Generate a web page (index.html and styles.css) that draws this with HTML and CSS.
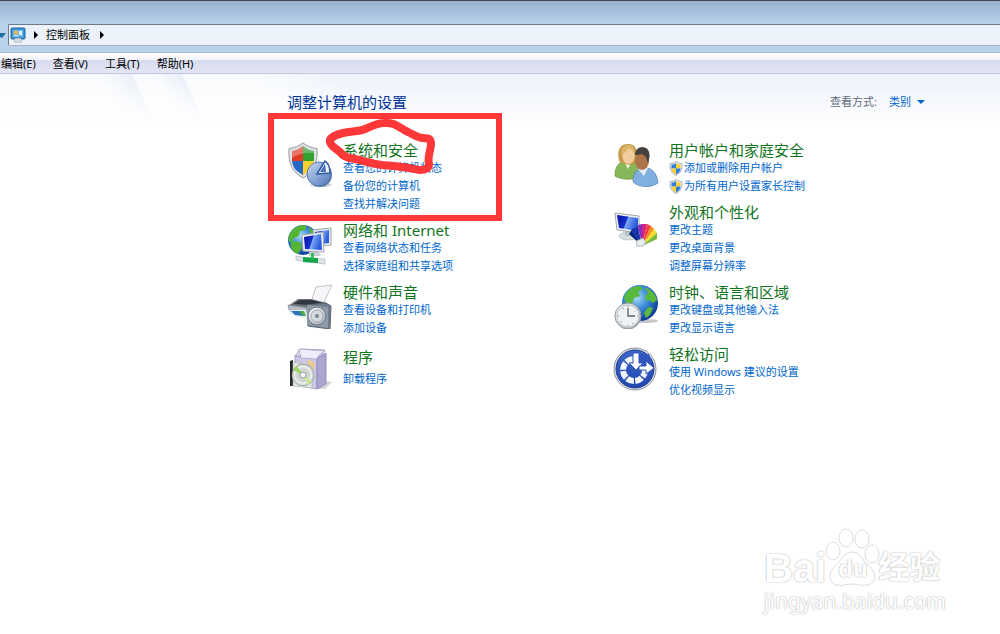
FILE: index.html
```html
<!DOCTYPE html>
<html lang="zh-CN">
<head>
  <meta charset="UTF-8">
  <title>控制面板</title>
  <link rel="stylesheet" href="styles.css">
</head>
<body>

  <!-- gradients and the small shield shared by the icons -->
  <svg class="defs" aria-hidden="true">
    <defs>
      <linearGradient id="screen" x1="0" y1="0" x2="1" y2="0.3">
        <stop offset="0" stop-color="#0612a0"/><stop offset="0.5" stop-color="#1530cc"/><stop offset="0.55" stop-color="#7fa8f4"/><stop offset="1" stop-color="#2a5be0"/>
      </linearGradient>
      <radialGradient id="globe" cx="0.4" cy="0.35" r="0.65">
        <stop offset="0" stop-color="#a8dcf8"/><stop offset="0.5" stop-color="#3b8ad8"/><stop offset="1" stop-color="#0f3c96"/>
      </radialGradient>
      <linearGradient id="metal" x1="0" y1="0" x2="1" y2="1">
        <stop offset="0" stop-color="#ffffff"/><stop offset="1" stop-color="#9aa3ac"/>
      </linearGradient>
      <linearGradient id="pie" x1="0" y1="0" x2="1" y2="1">
        <stop offset="0" stop-color="#c9dcf2"/><stop offset="1" stop-color="#4a74b8"/>
      </linearGradient>
      <radialGradient id="disc">
        <stop offset="0" stop-color="#ffffff"/><stop offset="0.5" stop-color="#c9cfcb"/><stop offset="0.8" stop-color="#eef2ee"/><stop offset="1" stop-color="#a9b0ac"/>
      </radialGradient>
      <linearGradient id="ease" x1="0" y1="0" x2="0" y2="1">
        <stop offset="0" stop-color="#3f68cc"/><stop offset="1" stop-color="#1f45b0"/>
      </linearGradient>
      <symbol id="uac" viewBox="0 0 14 16">
        <path d="M7 .5C5 2 3 2.600 .7 2.700C.5 8.500 1.500 12.500 7 15.500C12.500 12.500 13.500 8.500 13.300 2.700C11 2.600 9 2 7 .5Z" fill="#e8edf2" stroke="#8c97a3" stroke-width=".8"/>
        <path d="M7 2.200C5.500 3.300 4 3.800 2.200 4V8H7Z" fill="#2f7fd8"/>
        <path d="M7 2.200C8.500 3.300 10 3.800 11.800 4V8H7Z" fill="#fbd232"/>
        <path d="M2.200 8C2.500 11 4 12.800 7 14.300V8Z" fill="#fbd232"/>
        <path d="M11.800 8C11.500 11 10 12.800 7 14.300V8Z" fill="#2f7fd8"/>
      </symbol>
    </defs>
  </svg>

  <header class="titlebar">
    <nav class="address">
      <svg class="history" viewBox="0 0 6 8"><path d="M0 2H6L2 7L0 6Z" fill="#1d6f9f"/></svg>
      <div class="path">
        <svg class="path-icon" viewBox="0 0 16 16">
          <rect x="1" y="1" width="14" height="11" rx="1" fill="#3f93d0" stroke="#24689f"/>
          <rect x="3" y="3" width="10" height="7" fill="#6bb9ea"/>
          <circle cx="6" cy="5.500" r="2" fill="#f2b43c"/><path d="M9 4H12V8H9ZM4 8H8V9H4Z" fill="#d9f0fb"/>
          <ellipse cx="8" cy="13.500" rx="4" ry="2.500" fill="#d3dbe1" stroke="#98a6b1" stroke-width=".5"/>
        </svg>
        <span class="arrow"></span>
        <a href="#">控制面板</a>
        <span class="arrow"></span>
      </div>
    </nav>
  </header>

  <nav class="menubar">
    <button type="button">编辑(E)</button>
    <button type="button">查看(V)</button>
    <button type="button">工具(T)</button>
    <button type="button">帮助(H)</button>
  </nav>

  <main class="content">
    <div class="heading">
      <h1>调整计算机的设置</h1>
      <div class="view-by">
        <span>查看方式:</span>
        <button type="button">类别<span class="caret"></span></button>
      </div>
    </div>

    <div class="columns">
      <div class="column">
        <section class="category marked">
          <svg class="icon" viewBox="0 0 46 46">
            <ellipse cx="34" cy="44" rx="11" ry="2" fill="#cfd3d6"/>
            <path d="M16 2C12 5 7 7 2 7.500C1 22 5 31 16 37C27 31 31 22 30 7.500C25 7 20 5 16 2Z" fill="#dfe2e4" stroke="#989da1"/>
            <path d="M16 5C12 8 9 9.500 5 10V20H16Z" fill="#de3a26"/>
            <path d="M16 5C20 8 23 9.500 27 10V20H16Z" fill="#33a032"/>
            <path d="M5 20C6 27 9 30 16 34V20Z" fill="#2868c8"/>
            <path d="M27 20C26 27 23 30 16 34V20Z" fill="#fbd22b"/>
            <path d="M5 10C9 9.500 12 8 16 5C20 8 23 9.500 27 10V12C18 11 11 13 5 17Z" fill="#fff" opacity=".3"/>
            <circle cx="33" cy="34" r="12" fill="#5677a9"/>
            <circle cx="32" cy="33" r="12" fill="url(#pie)" stroke="#5878aa"/>
            <path d="M30 33L38 20C41 22 43 27 43 32Z" fill="#e8f2fc" stroke="#2e55a2" stroke-width="1.500"/>
            <path d="M33 31L38 23L39 31Z" fill="#456fb5"/>
          </svg>
          <div class="info">
            <h2><a href="#">系统和安全</a></h2>
            <a href="#">查看您的计算机状态</a>
            <a href="#">备份您的计算机</a>
            <a href="#">查找并解决问题</a>
          </div>
          <svg class="marker" viewBox="0 0 234 108">
            <rect x="3" y="3" width="228" height="102"/>
            <path d="M62 29C61 25 67 22 75 20C84 18 90 19 97 16C104 13 109 10 116 10C127 9 131 15 140 19C146 22 150 25 155 25C161 25 163 26 163 31C163 37 159 44 161 51C161 56 156 57 151 57C140 54 127 53 114 52C104 51 96 48 87 46C78 45 74 42 72 39C68 35 63 34 62 29Z"/>
          </svg>
        </section>

        <section class="category">
          <svg class="icon" viewBox="0 0 46 46">
            <circle cx="16" cy="19" r="15" fill="url(#globe)"/>
            <path d="M4 11C8 5 15 3 20 5L18 9L13 10L12 15L7 17L5 22L2 20C1 16 2 13 4 11ZM8 20L14 22L15 27L11 33C5 31 3 26 4 22ZM22 6L28 11L23 13Z" fill="#55b635"/>
            <path d="M26 9L44 7V24L27 26Z" fill="#e7ebef" stroke="#9ea7b0"/><path d="M28 11L42 9V22L28 24Z" fill="url(#screen)"/>
            <path d="M15 14L36 11L37 31L16 30Z" fill="#eff2f5" stroke="#9ea7b0"/><path d="M17 16L34 13L35 29L18 28Z" fill="url(#screen)"/>
            <path d="M22 31H32L34 35H22Z" fill="#c5ccd2"/>
            <path d="M9 35L20 37L38 38V43L20 41L9 39Z" fill="#dfe3e5" stroke="#a8b0b5" stroke-width=".6"/>
            <path d="M16 36L31 37V42L16 41Z" fill="#12a84a"/><path d="M24 32H27V38H24Z" fill="#35ba5f"/>
          </svg>
          <div class="info">
            <h2><a href="#">网络和 Internet</a></h2>
            <a href="#">查看网络状态和任务</a>
            <a href="#">选择家庭组和共享选项</a>
          </div>
        </section>

        <section class="category">
          <svg class="icon" viewBox="0 0 46 46">
            <path d="M24 19L29 4L45 2L38 17L36 21Z" fill="#f4f6f8" stroke="#a8adb2" stroke-width=".7"/>
            <path d="M11 16H24L40 20L34 28H4L1 23Z" fill="#6b747d"/><path d="M13 17H25L36 20L22 22L6 21Z" fill="#30373f"/>
            <path d="M1 22L22 25L39 21V29L22 33L2 27Z" fill="#b6bdc4" stroke="#7f878f" stroke-width=".6"/>
            <path d="M4 27L19 27L21 35L10 34L2 30Z" fill="#e4edf3"/><path d="M4 28L13 28L17 33L8 32Z" fill="#2872bb"/><path d="M12 28H17L19 33H16Z" fill="#4fa747"/>
            <path d="M20 22L39 20L44 23L43 46L21 43Z" fill="#6f7e8c" stroke="#59656f"/>
            <path d="M20 22L41 24V45L20 42Z" fill="#8e9ba8"/>
            <circle cx="30" cy="33" r="9" fill="url(#metal)" stroke="#6d7a86"/><circle cx="30" cy="33" r="6" fill="#d5dbdf" stroke="#a5adb4"/><circle cx="30" cy="33" r="2" fill="#7d878f"/>
          </svg>
          <div class="info">
            <h2><a href="#">硬件和声音</a></h2>
            <a href="#">查看设备和打印机</a>
            <a href="#">添加设备</a>
          </div>
        </section>

        <section class="category">
          <svg class="icon" viewBox="0 0 46 46">
            <path d="M38 36L45 37L38 44H30Z" fill="#d5d5d9"/>
            <path d="M8 11L13 4L38 5L33 13Z" fill="#dedcf0" stroke="#9995bc" stroke-width=".8"/>
            <path d="M8 11L30 13V44L8 40Z" fill="#cac8e4" stroke="#9793bb" stroke-width=".8"/>
            <path d="M30 13L39 8V39L30 44Z" fill="#aaa6cf" stroke="#8985b2" stroke-width=".8"/>
            <path d="M12 4L14 13L30 14L32 10L38 6Z" fill="#eeedf9" stroke="#a19dc2" stroke-width=".7"/>
            <path d="M20 16C26 14 29 18 27 24L23 27Z" fill="#f0c68c"/>
            <path d="M3 16L6 15V41L3 41Z" fill="#26282b"/>
            <path d="M6 17L25 21V43L6 41Z" fill="#e2e8e4" stroke="#a7afab" stroke-width=".6"/>
            <circle cx="16" cy="30" r="11" fill="url(#disc)" stroke="#9da69f" stroke-width=".6"/>
            <path d="M16 30L6 25L10 21Z" fill="#9fd45f"/><path d="M16 30L25 36L21 40Z" fill="#c7e693"/>
            <circle cx="16" cy="30" r="3" fill="#fff" stroke="#8e9691"/>
          </svg>
          <div class="info">
            <h2><a href="#">程序</a></h2>
            <a href="#">卸载程序</a>
          </div>
        </section>
      </div>

      <div class="column">
        <section class="category">
          <svg class="icon" viewBox="0 0 46 46">
            <path d="M2 35C2 24 7 20 15 20C24 20 28 26 28 36C20 39 8 39 2 35Z" fill="#86b85a" stroke="#5b8a30" stroke-width=".7"/>
            <path d="M10 19L15 28L20 19Z" fill="#e9f2d8"/>
            <path d="M7 22C3 12 6 3 14 3C24 2 26 12 23 22L17 24Z" fill="#c49a4c"/>
            <ellipse cx="15.500" cy="15" rx="6" ry="8" fill="#f3cda0"/><path d="M8 14C12 13 14 9 16 7C19 7 20 11 22 13C22 5 18 3 14 4C10 5 8 8 8 14Z" fill="#dbb665"/>
            <path d="M20 41C20 31 25 27 32 27C40 27 44 33 45 42C38 47 27 47 20 41Z" fill="#80afe0" stroke="#557fb4" stroke-width=".7"/>
            <path d="M25 28L31 35L35 27Z" fill="#e5f0fa"/>
            <ellipse cx="29" cy="20" rx="7" ry="9" fill="#ad7448"/>
            <path d="M22 14C22 9 25 6 30 6C37 7 38 14 35 22L33 16L29 13C26 14 24 14 22 14Z" fill="#45413f"/>
          </svg>
          <div class="info">
            <h2><a href="#">用户帐户和家庭安全</a></h2>
            <a href="#"><svg class="uac"><use href="#uac"/></svg>添加或删除用户帐户</a>
            <a href="#"><svg class="uac"><use href="#uac"/></svg>为所有用户设置家长控制</a>
          </div>
        </section>

        <section class="category">
          <svg class="icon" viewBox="0 0 46 46">
            <ellipse cx="16" cy="33" rx="10" ry="4" fill="#d8dde1" stroke="#a8b0b6" stroke-width=".6"/>
            <path d="M12 25H20V33H12Z" fill="#bac1c7"/>
            <path d="M2 10L26 13V30L4 27Z" fill="#eef1f3" stroke="#9fa7ae"/>
            <path d="M4 12L25 15V28L6 25Z" fill="url(#screen)"/>
            <path d="M29 43L16 31L20 25Z" fill="#0c2278"/><path d="M29 43L18 28L25 23Z" fill="#1834a8"/>
            <path d="M29 43L25 22L29 21Z" fill="#8c2cba"/><path d="M29 43L29 21L34 21Z" fill="#d32386"/>
            <path d="M29 43L34 21L38 23Z" fill="#f04135"/><path d="M29 43L38 23L41 26Z" fill="#f78b1f"/>
            <path d="M29 43L41 26L44 30Z" fill="#f8dc2e"/><path d="M29 43L44 30L44 36Z" fill="#73bd38"/>
            <path d="M23 38L30 35L33 39L30 43L24 43Z" fill="#e8ecef" stroke="#8d959b" stroke-width=".6"/>
          </svg>
          <div class="info">
            <h2><a href="#">外观和个性化</a></h2>
            <a href="#">更改主题</a>
            <a href="#">更改桌面背景</a>
            <a href="#">调整屏幕分辨率</a>
          </div>
        </section>

        <section class="category">
          <svg class="icon" viewBox="0 0 46 46">
            <ellipse cx="32" cy="38" rx="13" ry="2" fill="#c6c9cc"/>
            <circle cx="27" cy="20" r="18" fill="url(#globe)"/>
            <path d="M11 14C14 6 21 3 27 3L30 6L25 9L27 13L21 15L19 21L14 21L12 18ZM31 4C38 6 43 11 44 17L40 20L36 17L33 18L32 13L35 10ZM35 24L40 25L37 32L33 35L31 30Z" fill="#58b93c"/>
            <circle cx="15" cy="33" r="13" fill="url(#metal)" stroke="#9299a0"/><circle cx="15" cy="33" r="11" fill="#eef2f4" stroke="#c1c8cc"/>
            <path d="M15 25V33H22" fill="none" stroke="#58636b" stroke-width="1.300"/>
            <path d="M15 23V24M15 42V43M5 33H6M24 33H25M10 25L10.500 26M20 41L19.500 40M8 39L9 38.500M22 28L21.500 28.500" stroke="#77818a"/>
          </svg>
          <div class="info">
            <h2><a href="#">时钟、语言和区域</a></h2>
            <a href="#">更改键盘或其他输入法</a>
            <a href="#">更改显示语言</a>
          </div>
        </section>

        <section class="category">
          <svg class="icon" viewBox="0 0 46 46">
            <circle cx="22" cy="24" r="21" fill="#e2e6ea" stroke="#8d949c"/>
            <circle cx="22" cy="24" r="19" fill="url(#ease)" stroke="#1b3788"/>
            <circle cx="21" cy="25" r="11" fill="none" stroke="#f2f5fb" stroke-width="6" stroke-dasharray="7.240 1.400"/>
            <path d="M23 9L36 9L40 22L24 23Z" fill="#2f56bd"/>
            <path d="M20 8H26V18H30L23 25L16 18H20Z" fill="#fff" stroke="#2f56bd"/>
            <path d="M26 21H33V16L41 23L33 29V25H26Z" fill="#fff" stroke="#2f56bd"/>
          </svg>
          <div class="info">
            <h2><a href="#">轻松访问</a></h2>
            <a href="#">使用 Windows 建议的设置</a>
            <a href="#">优化视频显示</a>
          </div>
        </section>
      </div>
    </div>
  </main>

  <div class="watermark">
    <div class="brand">
      <span>Bai</span>
      <div class="paw">
        <svg viewBox="0 0 52 60">
          <ellipse cx="7" cy="27" rx="7" ry="9"/><ellipse cx="20" cy="14" rx="7" ry="9"/>
          <ellipse cx="36" cy="15" rx="7" ry="9"/><ellipse cx="46" cy="30" rx="7" ry="9"/>
          <path d="M26 28C34 28 36 36 42 41C52 49 50 61 40 61C33 62 31 60 26 60C21 60 17 62 11 61C2 59 2 48 10 41C16 36 18 28 26 28Z"/>
        </svg>
        <span class="du">du</span>
      </div>
      <span class="exp">经验</span>
    </div>
    <div class="site">jingyan.baidu.com</div>
  </div>

</body>
</html>
```
FILE: styles.css
```css
* {
  box-sizing: border-box;
}
body {
  margin: 0;
  min-height: 100vh;
  position: relative;
  background: #fff;
  font-family: "Noto Sans", "Noto Sans CJK SC", sans-serif;
  font-size: 11px;
  line-height: 18px;
  color: #000;
}
a {
  color: #0066cc;
  text-decoration: none;
}
a:hover {
  text-decoration: underline;
}
button {
  padding: 0;
  border: none;
  background: none;
  font: inherit;
  color: inherit;
}
.defs {
  position: absolute;
  width: 0;
  height: 0;
}

/* window frame */
.titlebar {
  padding: 23px 0 6px;
  border-top: 1px solid #44484d;
  border-bottom: 1px solid #a9bdd4;
  background: linear-gradient(#97b0d0, #b9d1ea 22px);
}
.address {
  display: flex;
  align-items: center;
  gap: 2px;
}
.history {
  width: 6px;
  height: 8px;
}
.path {
  flex: 1;
  display: flex;
  align-items: center;
  height: 22px;
  padding-left: 1px;
  border: 1px solid #6f7a88;
  border-right: none;
  border-bottom-color: #a9b5c2;
  border-radius: 2px 0 0 2px;
  background: #ebf2fa;
}
.path a {
  margin-right: 2px;
  color: #000;
}
.path-icon {
  width: 16px;
  height: 16px;
}
.arrow {
  margin: 0 8px;
  border-left: 4px solid #000;
  border-top: 4px solid transparent;
  border-bottom: 4px solid transparent;
}
.menubar {
  display: flex;
  gap: 17px;
  height: 21px;
  padding: 2px 1px;
  border-bottom: 1px solid #c3c9dc;
  background: linear-gradient(#fff, #f2f4fa 7px, #d7dcee 7px, #e2e5f5);
}

/* categories */
.content {
  padding: 19px 61px 0 287px;
  background:
    linear-gradient(#fff0, #fff),
    linear-gradient(65deg, #fff0 110px, #e9eff8 140px, #fff0 141px, #fff0 160px, #e9eff8 185px, #fff0 187px, #fff0 250px, #edf2fa 330px),
    linear-gradient(#f8fafd, #fff);
  background-size: 100% 50px;
  background-repeat: no-repeat;
}
.heading {
  display: flex;
  justify-content: space-between;
  padding-right: 14px;
}
h1,
h2 {
  margin: 0;
  font-size: 15px;
  font-weight: normal;
}
h1 {
  color: #003399;
}
h2 a {
  color: #11731b;
}
.view-by {
  display: flex;
  gap: 12px;
  color: #5e6b78;
}
.view-by button {
  display: flex;
  align-items: center;
  gap: 6px;
  color: #0066cc;
}
.caret {
  border-top: 4px solid #0066cc;
  border-left: 4px solid transparent;
  border-right: 4px solid transparent;
}
.columns {
  display: grid;
  grid-template-columns: 1fr 1fr;
  padding-top: 30px;
}
.column {
  display: flex;
  flex-direction: column;
  gap: 8px;
}
.category {
  display: flex;
  align-items: flex-start;
  gap: 10px;
}
.icon {
  width: 46px;
  height: 46px;
}
.info {
  display: flex;
  flex-direction: column;
  align-items: flex-start;
  justify-content: space-evenly;
  min-height: 46px;
}
.info h2 {
  line-height: 18px;
}
.info > a {
  display: flex;
  align-items: center;
  gap: 1px;
}
.uac {
  width: 14px;
  height: 15px;
}
.marked {
  position: relative;
}
.marker {
  position: absolute;
  left: -19px;
  top: -28px;
  width: 234px;
  height: 108px;
  fill: none;
  stroke: #fe3838;
  stroke-width: 6px;
  pointer-events: none;
}
.marker path {
  stroke-width: 8px;
  stroke-linejoin: round;
}

/* watermark */
.watermark {
  position: absolute;
  right: 54px;
  bottom: 20px;
  color: #fff;
  text-shadow: 0 0 2px #bbb, 0 0 1px #bbb;
}
.brand {
  display: flex;
  align-items: flex-end;
  font-family: "Liberation Sans", "Noto Sans CJK SC", sans-serif;
  font-size: 40px;
  font-weight: bold;
  line-height: 40px;
}
.paw {
  position: relative;
  width: 52px;
  height: 60px;
  margin-bottom: 4px;
}
.paw svg {
  width: 52px;
  height: 60px;
  overflow: visible;
  fill: #fff;
  stroke: #ddd;
}
.du {
  position: absolute;
  left: 12px;
  bottom: 0;
  font-size: 24px;
  line-height: 30px;
}
.exp {
  font-size: 31px;
}
.site {
  font-size: 21px;
  line-height: 26px;
}
```
